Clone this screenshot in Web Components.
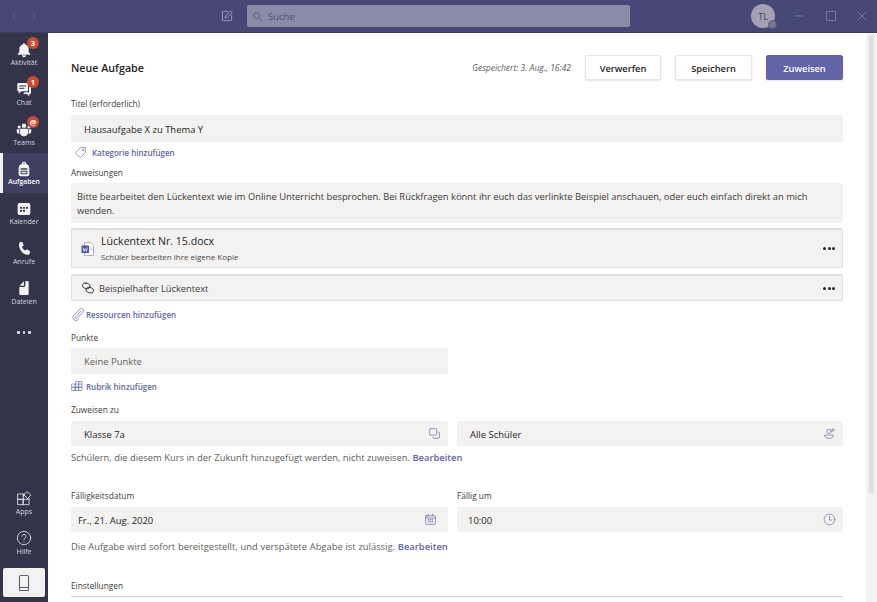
<!DOCTYPE html>
<html lang="de">
<head>
<meta charset="utf-8">
<title>Neue Aufgabe</title>
<style>
	html, body { margin: 0; height: 100%; overflow: hidden; }
	body { font-family: "Open Sans", "Noto Sans", sans-serif; }
</style>
</head>
<body>
<teams-app></teams-app>
<script>
(() => {
	const icons = {
		'back': '<polyline points="14 6 9 12 14 18"></polyline>',
		'forward': '<polyline points="10 6 15 12 10 18"></polyline>',
		'compose': '<path d="M13 4H6a2 2 0 0 0-2 2v12a2 2 0 0 0 2 2h12a2 2 0 0 0 2-2v-7"></path><path d="M9 15l1-4 8-8 3 3-8 8z"></path>',
		'search': '<circle cx="10" cy="10" r="6.5"></circle><line x1="15" y1="15" x2="21" y2="21"></line>',
		'minimize': '<line x1="3" y1="12" x2="21" y2="12"></line>',
		'maximize': '<rect x="3" y="3" width="18" height="18" rx="1"></rect>',
		'close': '<line x1="4" y1="4" x2="20" y2="20"></line><line x1="20" y1="4" x2="4" y2="20"></line>',
		'bell': '<path fill="currentColor" stroke="none" d="M12 2a2 2 0 0 1 2 1.8c3.2.9 5 3.6 5 7v3.7l2.4 3.4a.7.7 0 0 1-.6 1.1H3.2a.7.7 0 0 1-.6-1.1L5 14.500V10.800c0-3.400 1.800-6.100 5-7A2 2 0 0 1 12 2zM9 20h6a3 3 0 0 1-6 0z"></path>',
		'chat': '<path fill="currentColor" stroke="none" d="M3.500 3h13A1.500 1.500 0 0 1 18 4.500V14a1.500 1.500 0 0 1-1.500 1.500H8L4 19v-3.500h-.5A1.500 1.500 0 0 1 2 14V4.500A1.500 1.500 0 0 1 3.500 3z"></path><path fill="currentColor" stroke="none" d="M19.500 8H21a1.500 1.500 0 0 1 1.500 1.500V18a1.500 1.500 0 0 1-1.500 1.500h-1V23l-4-3.500h-5.500L13 17h5.500a1 1 0 0 0 1-1z"></path><g stroke="#33344a" stroke-width="1.500"><line x1="5.500" y1="7.500" x2="14.500" y2="7.500"></line><line x1="5.500" y1="11" x2="12" y2="11"></line></g>',
		'teams': '<g fill="currentColor" stroke="none"><circle cx="12" cy="7" r="3.400"></circle><circle cx="4.700" cy="9" r="2.300"></circle><circle cx="19.300" cy="9" r="2.300"></circle><path d="M7 11.500h10a1 1 0 0 1 1 1V17a6 6 0 0 1-12 0v-4.500a1 1 0 0 1 1-1z"></path><path d="M1.500 12.500H5V17c0 .9.150 1.700.4 2.400-2.200 0-4.400-1.400-4.400-4v-2.400zM22.500 12.500H19V17c0 .9-.15 1.700-.4 2.400 2.200 0 4.400-1.400 4.400-4v-2.400z"></path></g>',
		'backpack': '<path fill="currentColor" stroke="none" fill-rule="evenodd" d="M9 2.500A1.500 1.500 0 0 1 10.500 1h3A1.500 1.500 0 0 1 15 2.500V4.300c2.900.9 5 3.300 5 6.700v9a3 3 0 0 1-3 3H7a3 3 0 0 1-3-3v-9c0-3.400 2.100-5.800 5-6.700zM10.500 2.500v1.400a9 9 0 0 1 3 0V2.500zM7 11v2h10v-2zM7 14.500V20h10v-5.500zM8.500 16h7v2.500h-7z"></path>',
		'calendar-fill': '<path fill="currentColor" stroke="none" fill-rule="evenodd" d="M5 3h14a2.500 2.500 0 0 1 2.500 2.500v13A2.500 2.500 0 0 1 19 21H5a2.500 2.500 0 0 1-2.500-2.500v-13A2.500 2.500 0 0 1 5 3zM6 9v2.500h3V9zM10.500 9v2.500h3V9zM15 9v2.500h3V9zM6 13.500V16h3v-2.500zM10.500 13.500V16h3v-2.500z"></path>',
		'phone': '<path fill="currentColor" stroke="none" d="M7 2.500l3 .8 1.400 5-2.400 2.200c.8 2 2.400 3.800 4.700 5.200l2.700-1.700 4.300 2.500.3 3.200c-1 1.700-3 2.700-5 2.300C9.700 20.700 4.500 14 4.500 7 4.500 5 5.500 3.400 7 2.500z"></path>',
		'file-fill': '<path fill="currentColor" stroke="none" d="M14 1.500h3.500A1.500 1.500 0 0 1 19 3v18a1.500 1.500 0 0 1-1.500 1.500h-11A1.500 1.500 0 0 1 5 21V10.500l7-.1a2 2 0 0 0 2-2z"></path><path fill="currentColor" stroke="none" d="M12 1.800V7.500a1 1 0 0 1-1 1H5.300z"></path>',
		'apps': '<rect x="3" y="4.500" width="8" height="8"></rect><rect x="3" y="12.500" width="8" height="8"></rect><rect x="11" y="12.500" width="8.500" height="8"></rect><path d="M11 8V4.500h1.500M19.500 12.500V11" ></path><rect x="13.700" y="2.700" width="7" height="7" transform="rotate(45 17.200 6.200)"></rect>',
		'help': '<circle cx="12" cy="12" r="10"></circle><path d="M9 9.500a3 3 0 1 1 4.700 2.500c-1.100.7-1.700 1.300-1.700 2.500"></path><line x1="12" y1="17.500" x2="12" y2="17.600"></line>',
		'mobile': '<rect x="6" y="2" width="12" height="20" rx="1.500"></rect><line x1="6" y1="18" x2="18" y2="18"></line>',
		'tag': '<path d="M20 3h-8L3.500 11.500a1.500 1.500 0 0 0 0 2.100l6.900 6.900a1.500 1.500 0 0 0 2.100 0L21 12V4a1 1 0 0 0-1-1z"></path><circle cx="16.500" cy="7.500" r="1"></circle>',
		'clip': '<path d="M17.500 7L8 16.500a1.800 1.800 0 0 0 2.600 2.600L20.500 9a3.800 3.800 0 0 0-5.400-5.400L4.700 14a5.600 5.600 0 0 0 7.900 7.900"></path>',
		'table': '<rect x="2" y="8" width="7" height="6.500"></rect><rect x="2" y="14.500" width="7" height="6.500"></rect><rect x="9" y="8" width="6.500" height="6.500"></rect><rect x="9" y="14.500" width="6.500" height="6.500"></rect><rect x="15.500" y="8" width="6.500" height="6.500"></rect><rect x="15.500" y="14.500" width="6.500" height="6.500"></rect><path d="M9 8V3h6.500v5M15.500 3h6.500v5"></path>',
		'link': '<g transform="rotate(18 12 12)"><rect x="1.500" y="5" width="13" height="9" rx="4.500"></rect><rect x="9.500" y="10" width="13" height="9" rx="4.500"></rect></g>',
		'copy': '<rect x="3" y="3" width="13" height="12" rx="2"></rect><path d="M19 9a2 2 0 0 1 2 2v8a2 2 0 0 1-2 2h-8a2 2 0 0 1-2-2"></path>',
		'person-add': '<circle cx="11" cy="8" r="4"></circle><path d="M3 15h16v1.500C19 19 16 21 11 21s-8-2-8-4.500z"></path><path d="M18.500 3v5M16 5.500h5"></path>',
		'calendar': '<rect x="3" y="5" width="18" height="16" rx="2"></rect><line x1="3" y1="9" x2="21" y2="9"></line><line x1="8" y1="2.500" x2="8" y2="5"></line><line x1="16" y1="2.500" x2="16" y2="5"></line><path d="M8 12.500h1M11.500 12.500h1M15 12.500h1M8 16h1M11.500 16h1M15 16h1" stroke-width="2"></path>',
		'clock': '<circle cx="12" cy="12" r="10"></circle><polyline points="12 6 12 13 17 13"></polyline>',
	};

	class SvgIcon extends HTMLElement {
		connectedCallback() {
			const width = this.getAttribute('stroke') || '1.5';
			this.attachShadow({ mode: 'open' }).innerHTML = `
				<style>
					:host { display: block; width: var(--icon-size, 14px); height: var(--icon-size, 14px); flex: none; }
					svg { display: block; width: 100%; height: 100%; }
				</style>
				<svg xmlns="http://www.w3.org/2000/svg" viewBox="0 0 24 24" fill="none" stroke="currentColor"
					stroke-width="${width}" stroke-linecap="round" stroke-linejoin="round">${icons[this.getAttribute('icon')] || ''}</svg>`;
		}
	}

	class TitleBar extends HTMLElement {
		constructor() {
			super();
			this.attachShadow({ mode: 'open' }).innerHTML = `
				<style>
					:host { display: flex; align-items: center; height: 33px; background: #464775; border-bottom: 1px solid #3a3a5c; box-sizing: border-box; color: #8485ab; }
					.nav { display: flex; gap: 8px; margin-left: 8px; --icon-size: 12px; color: #6e6f9a; }
					.compose { margin-left: 180px; --icon-size: 14px; color: #a9a9c4; }
					.search { display: flex; align-items: center; gap: 5px; width: 383px; height: 22px; margin-left: 13px; padding-left: 5px; box-sizing: border-box; background: #8a8ba7; border-radius: 2px; font-size: 9.500px; color: #505171; --icon-size: 11px; }
					.avatar { position: relative; display: flex; align-items: center; justify-content: center; width: 24px; height: 24px; margin-left: 121px; border-radius: 50%; background: #a3a1b3; font-size: 9px; color: #45465f; }
					.status { position: absolute; right: -2px; bottom: -1px; width: 7px; height: 7px; border-radius: 50%; background: #74748a; border: 1px solid #5d5d7c; }
					.windows { display: flex; gap: 19.500px; margin-left: 18px; --icon-size: 12px; }
				</style>
				<div class="nav"><svg-icon icon="back"></svg-icon><svg-icon icon="forward"></svg-icon></div>
				<svg-icon class="compose" icon="compose"></svg-icon>
				<div class="search"><svg-icon icon="search"></svg-icon><span>Suche</span></div>
				<div class="avatar">TL<span class="status"></span></div>
				<div class="windows">
					<svg-icon icon="minimize"></svg-icon>
					<svg-icon icon="maximize"></svg-icon>
					<svg-icon icon="close"></svg-icon>
				</div>`;
		}
	}

	class RailItem extends HTMLElement {
		connectedCallback() {
			const badge = this.getAttribute('badge');
			this.attachShadow({ mode: 'open' }).innerHTML = `
				<style>
					:host { position: relative; display: flex; flex-direction: column; align-items: center; justify-content: flex-start; width: 48px; height: 39.750px; box-sizing: border-box; padding-top: 8px; color: #d3d3de; --icon-size: 16px; }
					:host([active]) { background: #3f405f; border-left: 3px solid #f3f2f1; color: #fff; font-weight: 600; padding-right: 3px; }
					:host([active]) span { font-size: 6.800px; }
					span { font-size: 7px; line-height: 10px; margin-top: .500px; white-space: nowrap; }
					svg-icon { color: #f3f2f1; }
					b { position: absolute; left: 27px; top: 3px; width: 12px; height: 12px; line-height: 12px; border-radius: 50%; background: #cc4a31; color: #fff; font-size: 7.500px; font-weight: 700; text-align: center; }
				</style>
				<svg-icon icon="${this.getAttribute('icon')}" stroke="${this.getAttribute('stroke') || '1.5'}"></svg-icon>
				<span>${this.getAttribute('label')}</span>
				${badge ? `<b>${badge}</b>` : ''}`;
		}
	}

	class AppRail extends HTMLElement {
		constructor() {
			super();
			this.attachShadow({ mode: 'open' }).innerHTML = `
				<style>
					:host { display: flex; flex-direction: column; width: 48px; flex: none; box-sizing: border-box; padding-top: .500px; background: #33344a; font-weight: 400; }
					.more { display: flex; justify-content: center; gap: 3px; height: 41px; align-items: center; }
					.more i { width: 2.500px; height: 2.500px; border-radius: 50%; background: #e8e8ef; }
					.spacer { flex: 1; }
					.phone { display: flex; align-items: center; justify-content: center; width: 42px; height: 29px; margin: 6px 3px 5px; background: #f3f2f1; border-radius: 2px; color: #5c5b70; --icon-size: 18px; }
				</style>
				<rail-item icon="bell" label="Aktivität" badge="3"></rail-item>
				<rail-item icon="chat" label="Chat" badge="1"></rail-item>
				<rail-item icon="teams" label="Teams" badge="@"></rail-item>
				<rail-item icon="backpack" label="Aufgaben" active></rail-item>
				<rail-item icon="calendar-fill" label="Kalender"></rail-item>
				<rail-item icon="phone" label="Anrufe"></rail-item>
				<rail-item icon="file-fill" label="Dateien"></rail-item>
				<div class="more"><i></i><i></i><i></i></div>
				<div class="spacer"></div>
				<rail-item icon="apps" label="Apps" stroke="1.2"></rail-item>
				<rail-item icon="help" label="Hilfe" stroke="1.2"></rail-item>
				<div class="phone"><svg-icon icon="mobile"></svg-icon></div>`;
		}
	}

	class PushButton extends HTMLElement {
		constructor() {
			super();
			this.attachShadow({ mode: 'open' }).innerHTML = `
				<style>
					:host { display: flex; align-items: center; justify-content: center; width: 77px; height: 25px; box-sizing: border-box; padding-top: 1px; background: #fff; border: 1px solid #e6e5e3; border-radius: 2px; box-shadow: 0 1px 2px rgba(0,0,0,.12); font-size: 9.300px; font-weight: 600; color: #252424; }
					:host([primary]) { background: #6264a7; border-color: #6264a7; color: #fff; }
				</style>
				<slot></slot>`;
		}
	}

	class FieldLabel extends HTMLElement {
		constructor() {
			super();
			this.attachShadow({ mode: 'open' }).innerHTML = `
				<style>
					:host { display: block; height: 14px; padding-top: 1px; box-sizing: border-box; line-height: 14px; font-size: 8.300px; font-weight: 400; color: #3b3a39; white-space: nowrap; }
				</style>
				<slot></slot>`;
		}
	}

	class TextBox extends HTMLElement {
		constructor() {
			super();
			this.attachShadow({ mode: 'open' }).innerHTML = `
				<style>
					:host { display: flex; align-items: center; justify-content: space-between; box-sizing: border-box; padding: 2px 13px 0; background: #f3f2f1; border-radius: 2px; font-size: 9.450px; color: #252424; white-space: nowrap; --icon-size: 13px; }
					::slotted(svg-icon) { color: #6264a7; margin: -2px -6px 0 0; }
				</style>
				<slot></slot><slot name="icon"></slot>`;
		}
	}

	class AddLink extends HTMLElement {
		connectedCallback() {
			this.attachShadow({ mode: 'open' }).innerHTML = `
				<style>
					:host { display: flex; align-items: center; height: 14px; font-size: 8px; font-weight: 600; color: #6264a7; white-space: nowrap; --icon-size: 12px; }
					svg-icon { margin-right: var(--icon-gap, 3px); }
				</style>
				<svg-icon icon="${this.getAttribute('icon')}" stroke="1.2"></svg-icon><slot></slot>`;
		}
	}

	class HintText extends HTMLElement {
		constructor() {
			super();
			this.attachShadow({ mode: 'open' }).innerHTML = `
				<style>
					:host { display: block; height: 14px; padding-top: 1px; box-sizing: border-box; line-height: 14px; font-size: 9.400px; color: #605e5c; white-space: nowrap; }
					::slotted(a) { color: #6264a7; font-weight: 600; }
				</style>
				<slot></slot>`;
		}
	}

	class AttachmentCard extends HTMLElement {
		constructor() {
			super();
			this.attachShadow({ mode: 'open' }).innerHTML = `
				<style>
					:host { display: flex; align-items: center; box-sizing: border-box; background: #f3f2f1; border: 1px solid #e1dfdd; border-top-width: 2px; border-radius: 2px; padding: 0 7px 0 9px; gap: 6px; color: #252424; }
					.body { flex: 1; min-width: 0; }
					.dots { display: flex; gap: 1.500px; }
					.dots i { width: 3px; height: 3px; border-radius: 50%; background: #252424; }
				</style>
				<slot name="icon"></slot>
				<div class="body"><slot></slot></div>
				<div class="dots"><i></i><i></i><i></i></div>`;
		}
	}

	class WordIcon extends HTMLElement {
		constructor() {
			super();
			this.attachShadow({ mode: 'open' }).innerHTML = `
				<style>
					:host { display: block; width: 14px; height: 14px; flex: none; }
					svg { display: block; width: 100%; height: 100%; }
				</style>
				<svg xmlns="http://www.w3.org/2000/svg" viewBox="0 0 14 14">
					<path d="M3.500 .5h6l3 3v10h-9z" fill="#fff" stroke="#9c9bb0" stroke-width=".8"></path>
					<rect x=".5" y="3.500" width="7.500" height="7.500" rx=".6" fill="#4b4fa8"></rect>
					<path d="M2 5.500l1 4 1.200-3 1.200 3 1-4" fill="none" stroke="#fff" stroke-width=".7"></path>
					<path d="M9 6h2.500M9 8h2.500" stroke="#b0afc2" stroke-width=".7"></path>
				</svg>`;
		}
	}

	class WindowScrollbar extends HTMLElement {
		constructor() {
			super();
			this.attachShadow({ mode: 'open' }).innerHTML = `
				<style>
					:host { display: block; width: 11px; flex: none; background: #f3f2f1; box-sizing: border-box; padding: 2px 3px 0; }
					div { width: 5px; height: 459px; background: #e1dfe2; border-radius: 2px; }
				</style>
				<div></div>`;
		}
	}

	class AssignmentForm extends HTMLElement {
		constructor() {
			super();
			this.attachShadow({ mode: 'open' }).innerHTML = `
				<style>
					:host { display: block; flex: 1; min-width: 0; background: #fff; padding: 22px 23px 0; box-sizing: border-box; overflow: hidden; --icon-size: 12px; }
					.head { display: flex; align-items: center; gap: 14px; }
					.head push-button:first-of-type { width: 76px; }
					h1 { flex: 1; margin: 1px 0 0; font-size: 10.700px; font-weight: 600; color: #252424; }
					.saved { font-size: 8.500px; font-style: italic; color: #605e5c; }
					.row { display: grid; grid-template-columns: 377px 386px; column-gap: 9px; }
					.instructions { display: block; padding: 7px 6px 0; height: 40px; box-sizing: border-box; background: #f3f2f1; border-radius: 2px; font-size: 9.400px; line-height: 14px; color: #3b3a39; }
					.file-name { font-size: 10.600px; line-height: 15px; color: #252424; }
					.file-sub { font-size: 8px; line-height: 13px; color: #484644; margin-top: 1px; }
					.link-name { font-size: 9.250px; color: #3b3a39; margin-left: -2px; }
					.points { width: 377px; height: 26px; padding-top: 1px; color: #605e5c; }
					.settings { border-bottom: 1px solid #d8d6d4; height: 4px; }
					svg-icon { color: #6264a7; }
				</style>
				<div class="head">
					<h1>Neue Aufgabe</h1>
					<span class="saved">Gespeichert: 3. Aug., 16:42</span>
					<push-button>Verwerfen</push-button>
					<push-button>Speichern</push-button>
					<push-button primary>Zuweisen</push-button>
				</div>
				<field-label style="margin-top:16px">Titel (erforderlich)</field-label>
				<text-box style="margin-top:5px;height:27px;padding-top:1px">Hausaufgabe X zu Thema Y</text-box>
				<add-link icon="tag" style="margin-top:3px;padding-left:3px;--icon-size:13px;gap:2px">Kategorie hinzufügen</add-link>
				<field-label style="margin-top:6px">Anweisungen</field-label>
				<div class="instructions" style="margin-top:4px">Bitte bearbeitet den Lückentext wie im Online Unterricht besprochen. Bei Rückfragen könnt ihr euch das verlinkte Beispiel anschauen, oder euch einfach direkt an mich wenden.</div>
				<attachment-card style="margin-top:5px;height:40px">
					<word-icon slot="icon"></word-icon>
					<div class="file-name">Lückentext Nr. 15.docx</div>
					<div class="file-sub">Schüler bearbeiten ihre eigene Kopie</div>
				</attachment-card>
				<attachment-card style="margin-top:6px;height:27px">
					<svg-icon slot="icon" icon="link" stroke="1.5" style="color:#33344a;--icon-size:14px"></svg-icon>
					<div class="link-name">Beispielhafter Lückentext</div>
				</attachment-card>
				<add-link icon="clip" style="margin-top:6px;--icon-size:14px;--icon-gap:1px">Ressourcen hinzufügen</add-link>
				<field-label style="margin-top:9px">Punkte</field-label>
				<text-box class="points" style="margin-top:4px">Keine Punkte</text-box>
				<add-link icon="table" style="margin-top:5px">Rubrik hinzufügen</add-link>
				<field-label style="margin-top:9px">Zuweisen zu</field-label>
				<div class="row" style="margin-top:5px">
					<text-box style="height:25px">Klasse 7a<svg-icon slot="icon" icon="copy" stroke="1.2"></svg-icon></text-box>
					<text-box style="height:25px">Alle Schüler<svg-icon slot="icon" icon="person-add" stroke="1.2"></svg-icon></text-box>
				</div>
				<hint-text style="margin-top:4px">Schülern, die diesem Kurs in der Zukunft hinzugefügt werden, nicht zuweisen. <a>Bearbeiten</a></hint-text>
				<div class="row" style="margin-top:24px">
					<field-label>Fälligkeitsdatum</field-label>
					<field-label>Fällig um</field-label>
				</div>
				<div class="row" style="margin-top:5px">
					<text-box style="height:25px;padding-left:7px;padding-right:17px">Fr., 21. Aug. 2020<svg-icon slot="icon" icon="calendar" stroke="1.2"></svg-icon></text-box>
					<text-box style="height:25px;padding-left:11px">10:00<svg-icon slot="icon" icon="clock" stroke="1.2"></svg-icon></text-box>
				</div>
				<hint-text style="margin-top:7px;word-spacing:.35px">Die Aufgabe wird sofort bereitgestellt, und verspätete Abgabe ist zulässig. <a>Bearbeiten</a></hint-text>
				<field-label style="margin-top:25px">Einstellungen</field-label>
				<div class="settings"></div>`;
		}
	}

	class TeamsApp extends HTMLElement {
		constructor() {
			super();
			this.attachShadow({ mode: 'open' }).innerHTML = `
				<style>
					:host { display: flex; flex-direction: column; height: 100vh; overflow: hidden; }
					.body { display: flex; flex: 1; min-height: 0; }
				</style>
				<title-bar></title-bar>
				<div class="body">
					<app-rail></app-rail>
					<assignment-form></assignment-form>
					<window-scrollbar></window-scrollbar>
				</div>`;
		}
	}

	customElements.define('svg-icon', SvgIcon);
	customElements.define('title-bar', TitleBar);
	customElements.define('rail-item', RailItem);
	customElements.define('app-rail', AppRail);
	customElements.define('push-button', PushButton);
	customElements.define('field-label', FieldLabel);
	customElements.define('text-box', TextBox);
	customElements.define('add-link', AddLink);
	customElements.define('hint-text', HintText);
	customElements.define('attachment-card', AttachmentCard);
	customElements.define('word-icon', WordIcon);
	customElements.define('window-scrollbar', WindowScrollbar);
	customElements.define('assignment-form', AssignmentForm);
	customElements.define('teams-app', TeamsApp);
})();
</script>
</body>
</html>
